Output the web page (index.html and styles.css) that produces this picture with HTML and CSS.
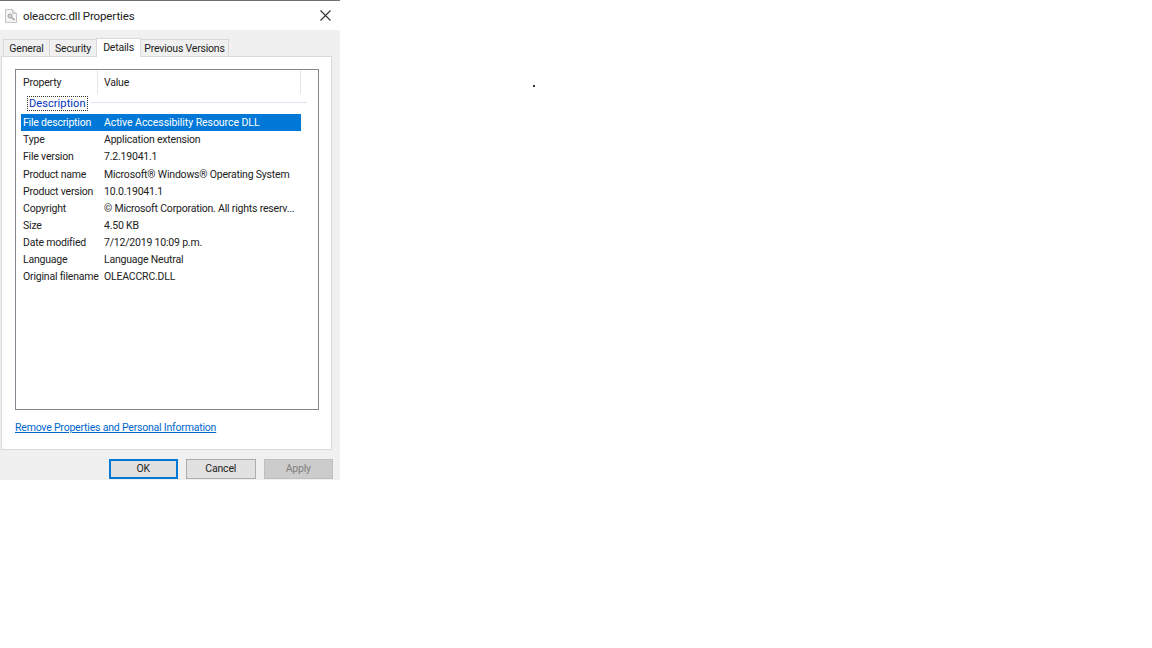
FILE: index.html
```html
<!DOCTYPE html>
<html lang="en">
<head>
<meta charset="utf-8">
<title>oleaccrc.dll Properties</title>
<link rel="stylesheet" href="styles.css">
</head>
<body>
<div class="dialog">
  <div class="titlebar">
    <svg class="file-icon" width="12" height="14" viewBox="0 0 12 14"><path d="M.5.5h7l4 4v9H.5z" fill="#f4f4f4" stroke="#c4c4c4"/><path d="M7.5.5v4h4" fill="#ddd" stroke="#c4c4c4"/><circle cx="5" cy="7" r="2" fill="#d0d4d8" stroke="#a0a0a0"/><path d="M6.500 8.500l3 2.500" stroke="#a0a0a0" stroke-width="1.500"/></svg>
    <span class="title">oleaccrc.dll Properties</span>
    <svg class="close" width="11" height="11" viewBox="0 0 11 11"><path d="M.5.5l10 10M10.500.5l-10 10" stroke="#333" stroke-width="1.100" fill="none"/></svg>
  </div>
  <div class="tabs">
    <span class="tab t1">General</span>
    <span class="tab t2">Security</span>
    <span class="tab active">Details</span>
    <span class="tab t4">Previous Versions</span>
  </div>
  <div class="panel">
    <div class="listbox">
      <div class="head">
        <span class="hcell prop">Property</span>
        <span class="hcell val">Value</span>
      </div>
      <div class="group">
        <span class="group-label">Description</span>
        <span class="group-line"></span>
      </div>
      <div class="rows">
        <div class="row selected"><span class="k">File description</span><span class="v">Active Accessibility Resource DLL</span></div>
        <div class="row"><span class="k">Type</span><span class="v">Application extension</span></div>
        <div class="row"><span class="k">File version</span><span class="v">7.2.19041.1</span></div>
        <div class="row"><span class="k">Product name</span><span class="v">Microsoft® Windows® Operating System</span></div>
        <div class="row"><span class="k">Product version</span><span class="v">10.0.19041.1</span></div>
        <div class="row"><span class="k">Copyright</span><span class="v">© Microsoft Corporation. All rights reserv...</span></div>
        <div class="row"><span class="k">Size</span><span class="v">4.50 KB</span></div>
        <div class="row"><span class="k">Date modified</span><span class="v">7/12/2019 10:09 p.m.</span></div>
        <div class="row"><span class="k">Language</span><span class="v">Language Neutral</span></div>
        <div class="row"><span class="k">Original filename</span><span class="v">OLEACCRC.DLL</span></div>
      </div>
    </div>
    <a class="link" href="#">Remove Properties and Personal Information</a>
  </div>
  <div class="buttons">
    <button class="btn default">OK</button>
    <button class="btn">Cancel</button>
    <button class="btn disabled">Apply</button>
  </div>
</div>
<span class="dot"></span>
</body>
</html>
```
FILE: styles.css
```css
* { box-sizing: border-box; }
html, body { margin: 0; padding: 0; background: #fff; }
body {
  width: 1152px;
  height: 648px;
  position: relative;
  overflow: hidden;
  font-family: Roboto, "Open Sans", sans-serif;
  font-size: 10.5px;
  letter-spacing: -.2px;
  color: #222;
}
.dialog {
  width: 340px;
  height: 480px;
  background: #f0f0f0;
  display: flex;
  flex-direction: column;
}
.titlebar {
  height: 30px;
  flex: none;
  background: #fff;
  border-top: 1px solid #6f6f6f;
  display: flex;
  align-items: center;
  padding: 0 9px 0 5px;
}
.file-icon { flex: none; margin-right: 6px; }
.title { flex: 1; font-size: 11.500px; letter-spacing: -.13px; }
.close { flex: none; }
.tabs {
  height: 26px;
  flex: none;
  display: flex;
  align-items: flex-end;
  padding-left: 3px;
  position: relative;
  z-index: 1;
}
.tab {
  height: 17px;
  background: #f0f0f0;
  border: 1px solid #d9d9d9;
  border-bottom: 0;
  display: flex;
  align-items: center;
  justify-content: center;
  white-space: nowrap;
  flex: none;
}
.t1 { width: 47px; }
.t2 { width: 48px; margin-left: -1px; }
.t4 { width: 89px; margin-left: -1px; }
.tab.active {
  height: 19px;
  width: 45px;
  margin-left: -1px;
  background: #fff;
  margin-bottom: -1px;
  padding-bottom: 2px;
  position: relative;
}
.panel {
  flex: none;
  height: 394px;
  margin: 0 8px 0 1px;
  background: #fff;
  border: 1px solid #d9d9d9;
  padding: 12px 12px 0 13px;
  display: flex;
  flex-direction: column;
}
.listbox {
  height: 341px;
  flex: none;
  border: 1px solid #828790;
  padding: 0 11px 0 5px;
  display: flex;
  flex-direction: column;
}
.head {
  height: 24px;
  flex: none;
  display: flex;
  margin-right: 6px;
}
.hcell { display: flex; align-items: center; padding-left: 2px; }
.prop { width: 77px; border-right: 1px solid #e5e5e5; }
.val { flex: 1; padding-left: 6px; border-right: 1px solid #e5e5e5; }
.group {
  height: 17px;
  flex: none;
  display: flex;
  align-items: center;
  margin: 1px 0 0 6px;
}
.group-label {
  border: 1px dotted #333;
  height: 15px;
  padding: 0 1px;
  display: flex;
  align-items: center;
  color: #0033bc;
  font-size: 11px;
  letter-spacing: .08px;
}
.group-line { flex: 1; height: 1px; background: #dbe3f4; margin: 0 0 2px 3px; }
.rows { display: flex; flex-direction: column; margin-top: 2px; }
.row {
  height: 17.170px;
  flex: none;
  display: flex;
  align-items: center;
  margin-right: 6px;
  white-space: nowrap;
}
.row.selected { background: #0078d7; color: #fff; }
.selected .v { letter-spacing: -.06px; }
.k { width: 82px; flex: none; padding-left: 2px; }
.v { flex: 1; padding-left: 1px; }
.link {
  margin-top: 11px;
  color: #0066cc;
  text-decoration: underline;
}
.buttons {
  flex: 1;
  display: flex;
  justify-content: flex-end;
  gap: 8px;
  padding: 9px 7px 0 0;
}
.btn {
  width: 69.500px;
  height: 20px;
  border: 1px solid #adadad;
  background: #e1e1e1;
  font: inherit;
  letter-spacing: inherit;
  color: #222;
  padding: 0 0 2px;
}
.btn.default { border: 2px solid #0078d7; }
.btn.disabled { background: #ccc; color: #7f7f7f; border-color: #bfbfbf; }
.dot {
  position: absolute;
  left: 533px;
  top: 85px;
  width: 2px;
  height: 2px;
  background: #333;
}
```
